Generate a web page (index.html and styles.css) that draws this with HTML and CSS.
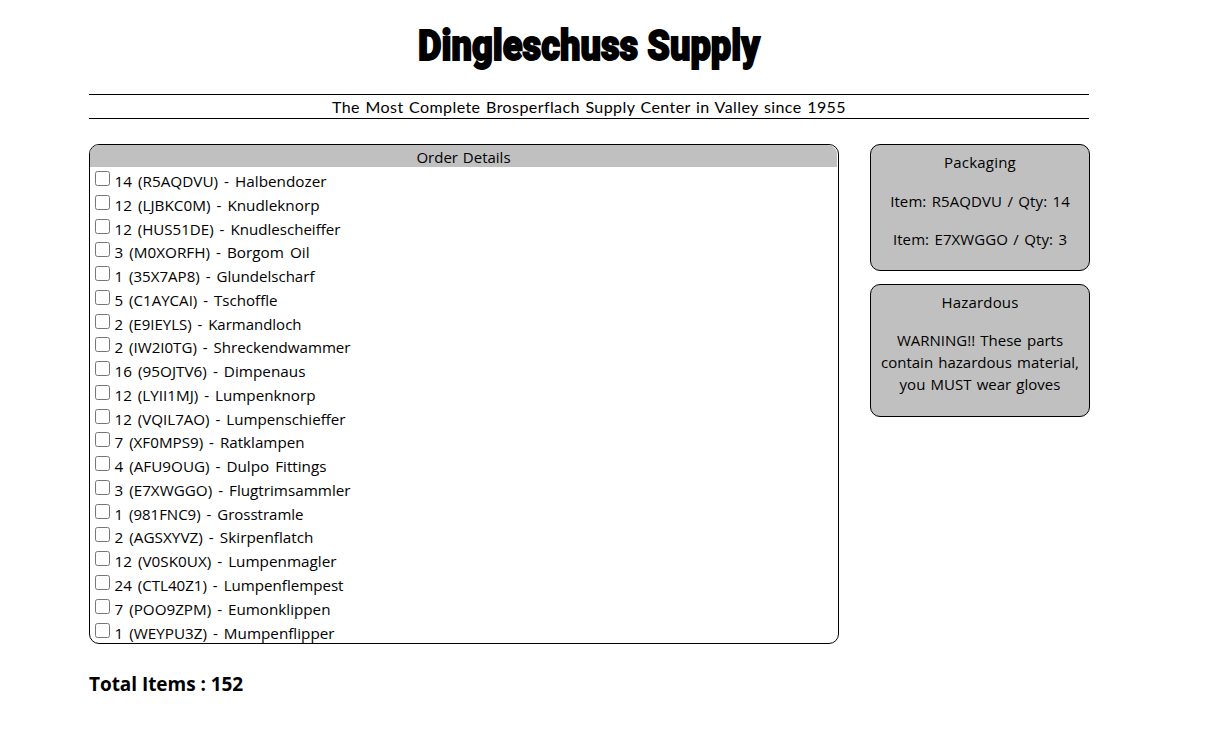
FILE: index.html
```html
<!DOCTYPE html>
<html lang="en">
<head>
<meta charset="utf-8">
<title>Dingleschuss Supply</title>
<link rel="stylesheet" href="styles.css">
</head>
<body>
<div class="page">
<header>
<h1><svg class="title" viewBox="0 0 352 66"><text x="4" y="43" textLength="342" lengthAdjust="spacingAndGlyphs">Dingleschuss Supply</text></svg></h1>
<div class="tagline"><svg class="motto" viewBox="0 0 514 23"><text x="0" y="18" textLength="514" lengthAdjust="spacingAndGlyphs">The Most Complete Brosperflach Supply Center in Valley since 1955</text></svg></div>
</header>
<main class="columns">
<section class="order">
<h2>Order Details</h2>
<ul id="items"></ul>
</section>
<aside>
<section class="card packaging"><h3>Packaging</h3><p>Item: R5AQDVU / Qty: 14</p><p>Item: E7XWGGO / Qty: 3</p></section>
<section class="card hazard"><h3>Hazardous</h3><p>WARNING!! These parts<br>contain hazardous material,<br>you MUST wear gloves</p></section>
</aside>
</main>
<footer>Total Items : 152</footer>
</div>
<script src="items.js"></script>
</body>
</html>
```
FILE: styles.css
```css
* { box-sizing: border-box; }
body { margin: 0; background: #fff; color: #000; font-family: "Segoe UI", "Open Sans", "Noto Sans", sans-serif; font-size: 15px; font-variant-ligatures: none; }
.page { width: 1001px; margin-left: 89px; }
h1, h2, h3, p, ul { margin: 0; padding: 0; font-weight: 400; font-size: inherit; }
h1 { height: 94px; padding-top: 17px; text-align: center; }
.title { width: 352px; height: 66px; font: 900 43px Impact, "Roboto", sans-serif; stroke: #000; stroke-width: 1.8px; overflow: visible; }
.tagline { width: 1000px; height: 25px; border-top: 1px solid #000; border-bottom: 1px solid #000; text-align: center; }
.motto { width: 514px; height: 23px; font: 15.5px "Comic Sans MS", "Lato", sans-serif; letter-spacing: .4px; word-spacing: 1px; display: block; margin: 0 auto; overflow: visible; }
.columns { display: flex; gap: 31px; margin-top: 25px; align-items: flex-start; }
.order { width: 750px; height: 500px; border: 1px solid #000; border-radius: 10px; overflow: hidden; padding-right: 1px; }
h2 { height: 22px; line-height: 25px; background: silver; text-align: center; border-top-right-radius: 9px; word-spacing: 1px; }
ul { list-style: none; padding-top: 2px; }
li { height: 23.78px; }
label { display: flex; height: 23.78px; }
input { width: 15px; height: 15px; margin: 2px 5px 0 5px; flex: none; }
.label-text { height: 24px; overflow: visible; word-spacing: 2px; }
aside { width: 220px; display: grid; gap: 13px; }
.card { border: 1px solid #000; border-radius: 10px; background: silver; text-align: center; line-height: 22px; padding-top: 6px; }
.card h3 { letter-spacing: .2px; }
.packaging { height: 127px; }
.hazard { height: 133px; }
.card p { margin-top: 16px; white-space: nowrap; word-spacing: 1.3px; }
.packaging p { letter-spacing: .1px; }
.packaging h3 + p { margin-top: 17px; }
footer { margin-top: 26px; font-size: 19px; font-weight: 700; line-height: 28px; letter-spacing: -.05px; }
```
FILE: items.js
```js
const items = [
  ["14 (R5AQDVU) - Halbendozer", 212], ["12 (LJBKC0M) - Knudleknorp", 205],
  ["12 (HUS51DE) - Knudlescheiffer", 226], ["3 (M0XORFH) - Borgom Oil", 195],
  ["1 (35X7AP8) - Glundelscharf", 200], ["5 (C1AYCAI) - Tschoffle", 163],
  ["2 (E9IEYLS) - Karmandloch", 187], ["2 (IW2I0TG) - Shreckendwammer", 236],
  ["16 (95OJTV6) - Dimpenaus", 191], ["12 (LYII1MJ) - Lumpenknorp", 201],
  ["12 (VQIL7AO) - Lumpenschieffer", 231], ["7 (XF0MPS9) - Ratklampen", 190],
  ["4 (AFU9OUG) - Dulpo Fittings", 212], ["3 (E7XWGGO) - Flugtrimsammler", 236],
  ["1 (981FNC9) - Grosstramle", 189], ["2 (AGSXYVZ) - Skirpenflatch", 199],
  ["12 (V0SK0UX) - Lumpenmagler", 222], ["24 (CTL40Z1) - Lumpenflempest", 229],
  ["7 (POO9ZPM) - Eumonklippen", 216], ["1 (WEYPU3Z) - Mumpenflipper", 220]
];
const svgNS = "http://www.w3.org/2000/svg";
for (const [name, width] of items) {
  const row = document.createElement("li");
  const label = document.createElement("label");
  const box = document.createElement("input");
  box.type = "checkbox";
  const svg = document.createElementNS(svgNS, "svg");
  svg.setAttribute("class", "label-text");
  svg.setAttribute("width", width);
  const text = document.createElementNS(svgNS, "text");
  text.setAttribute("x", "-0.5");
  text.setAttribute("y", "18");
  text.setAttribute("textLength", width);
  text.setAttribute("lengthAdjust", "spacingAndGlyphs");
  text.textContent = name;
  svg.append(text);
  label.append(box, svg);
  row.append(label);
  document.getElementById("items").append(row);
}
```
